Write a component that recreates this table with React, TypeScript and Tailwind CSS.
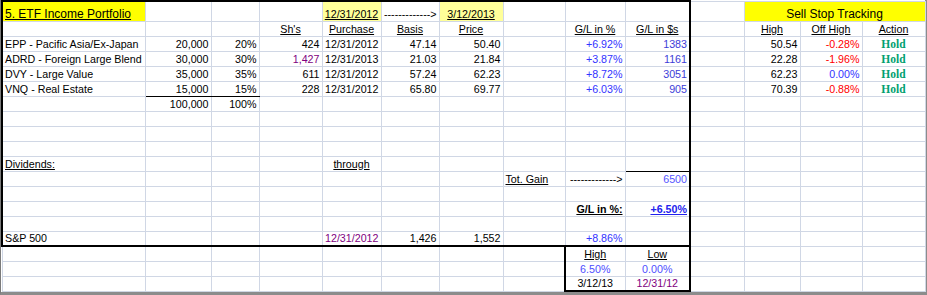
import React from "react";

type Cell = {
  v?: string;
  a?: "l" | "c" | "r";
  cls?: string;
  span?: number;
};

const widths = [
  "w-[143px]",
  "w-[66px]",
  "w-[48px]",
  "w-[63px]",
  "w-[59px]",
  "w-[58px]",
  "w-[64px]",
  "w-[62px]",
  "w-[60px]",
  "w-[65px]",
  "w-[54px]",
  "w-[56px]",
  "w-[62px]",
  "w-[63px]",
];

const U = "underline";
const BLUE = "text-[#3333ff]";
const PURPLE = "text-[#800080]";
const RED = "text-[#ff0000]";
const HOLD = "font-['Liberation_Serif',serif] font-bold text-[#00a070] text-[11.5px]";
const ARROW = "------------->";

const hold: Cell = { v: "Hold", a: "c", cls: HOLD };

function holding(
  name: string,
  amt: string,
  pct: string,
  sh: string,
  date: string,
  basis: string,
  price: string,
  gl: string,
  gain: string,
  high: string,
  off: string,
  shCls = "",
  offCls = RED
): Cell[] {
  return [
    { v: name },
    { v: amt, a: "r" },
    { v: pct, a: "r" },
    { v: sh, a: "r", cls: shCls },
    { v: date, a: "r" },
    { v: basis, a: "r" },
    { v: price, a: "r" },
    {},
    { v: gl, a: "r", cls: BLUE },
    { v: gain, a: "r", cls: "text-[#3c3cd8]" },
    {},
    { v: high, a: "r" },
    { v: off, a: "r", cls: offCls },
    hold,
  ];
}

const blank = (): Cell[] => Array.from({ length: 14 }, () => ({}));

function row(cells: Record<number, Cell>): Cell[] {
  const r = blank();
  Object.entries(cells).forEach(([k, c]) => (r[Number(k)] = c));
  return r;
}

const rows: Cell[][] = [
  [
    { v: "5. ETF Income Portfolio", cls: "bg-[#ffff00] underline text-[12px]" },
    {},
    {},
    {},
    { v: "12/31/2012", a: "c", cls: "bg-[#ffff99] underline" },
    { v: ARROW, a: "r" },
    { v: "3/12/2013", a: "c", cls: "bg-[#ffff99] underline" },
    {},
    {},
    {},
    {},
    { v: "Sell Stop Tracking", a: "c", span: 3, cls: "bg-[#ffff00] text-[12px]" },
  ],
  row({
    3: { v: "Sh's", a: "c", cls: U },
    4: { v: "Purchase", a: "c", cls: U },
    5: { v: "Basis", a: "c", cls: U },
    6: { v: "Price", a: "c", cls: U },
    8: { v: "G/L in %", a: "c", cls: U },
    9: { v: "G/L in $s", a: "c", cls: U },
    11: { v: "High", a: "c", cls: U },
    12: { v: "Off High", a: "c", cls: U },
    13: { v: "Action", a: "c", cls: U },
  }),
  holding("EPP - Pacific Asia/Ex-Japan", "20,000", "20%", "424", "12/31/2012", "47.14", "50.40", "+6.92%", "1383", "50.54", "-0.28%"),
  holding("ADRD - Foreign Large Blend", "30,000", "30%", "1,427", "12/31/2013", "21.03", "21.84", "+3.87%", "1161", "22.28", "-1.96%", PURPLE),
  holding("DVY - Large Value", "35,000", "35%", "611", "12/31/2012", "57.24", "62.23", "+8.72%", "3051", "62.23", "0.00%", "", BLUE),
  holding("VNQ - Real Estate", "15,000", "15%", "228", "12/31/2012", "65.80", "69.77", "+6.03%", "905", "70.39", "-0.88%"),
  row({ 1: { v: "100,000", a: "r" }, 2: { v: "100%", a: "r" } }),
  blank(),
  blank(),
  blank(),
  row({ 0: { v: "Dividends:", cls: U }, 4: { v: "through", a: "c", cls: U } }),
  row({
    7: { v: "Tot. Gain", cls: U },
    8: { v: ARROW, a: "r" },
    9: { v: "6500", a: "r", cls: "text-[#5555ff]" },
  }),
  blank(),
  row({
    8: { v: "G/L in %:", a: "r", cls: "underline font-bold" },
    9: { v: "+6.50%", a: "r", cls: "underline font-bold text-[#2222ee]" },
  }),
  blank(),
  row({
    0: { v: "S&P 500" },
    4: { v: "12/31/2012", a: "r", cls: PURPLE },
    5: { v: "1,426", a: "r" },
    6: { v: "1,552", a: "r" },
    8: { v: "+8.86%", a: "r", cls: BLUE },
  }),
  row({ 8: { v: "High", a: "c", cls: U }, 9: { v: "Low", a: "c", cls: U } }),
  row({ 8: { v: "6.50%", a: "c", cls: "text-[#4d4dff]" }, 9: { v: "0.00%", a: "c", cls: "text-[#4d4dff]" } }),
  row({ 8: { v: "3/12/13", a: "c" }, 9: { v: "12/31/12", a: "c", cls: PURPLE } }),
];

function borders(r: number, c: number, span: number): string {
  const out: string[] = [];
  const last = c + span - 1;
  // portfolio box
  if (r <= 15) {
    if (c === 0) out.push("border-l-2 border-l-black");
    if (last === 9 || (c <= 9 && last >= 9)) out.push("border-r-2 border-r-black");
  }
  if (r === 0 && c <= 9) out.push("border-t-2 border-t-black");
  if (r === 15 && c <= 9) out.push("border-b-2 border-b-black");
  // high / low box
  if (r >= 16) {
    if (c === 8) out.push("border-l-2 border-l-black");
    if (c === 9) out.push("border-r-2 border-r-black");
    if (r === 18 && (c === 8 || c === 9)) out.push("border-b-2 border-b-black");
  }
  // thin rules
  if (r === 5 && (c === 1 || c === 2)) out.push("border-b-black");
  if (r === 10 && c === 9) out.push("border-b-black");
  return out.join(" ");
}

export default function App() {
  return (
    <div className="w-[927px] h-[295px] bg-white overflow-hidden">
      <div className="w-[927px] border-l border-l-[#7a7a7a] border-r-2 border-r-[#8c8c8c] border-b-[3px] border-b-[#8c8c8c] bg-white">
        <table className="border-collapse table-fixed w-[924px] font-['Liberation_Sans',Arial,sans-serif] text-[10.7px] text-black">
          <colgroup>
            {widths.map((w, i) => (
              <col key={i} className={w} />
            ))}
          </colgroup>
          <tbody>
            {rows.map((cells, r) => {
              let col = 0;
              return (
                <tr key={r} className={r === 0 ? "h-[20px]" : "h-[15px]"}>
                  {cells.map((cell, i) => {
                    const span = cell.span ?? 1;
                    const c = col;
                    col += span;
                    const align =
                      cell.a === "r" ? "text-right" : cell.a === "c" ? "text-center" : "text-left";
                    return (
                      <td
                        key={i}
                        colSpan={span}
                        className={`border border-[#d0d7e5] p-0 px-[2px] leading-[13px] align-bottom whitespace-nowrap overflow-hidden ${align} ${borders(
                          r,
                          c,
                          span
                        )} ${cell.cls ?? ""}`}
                      >
                        {cell.v ?? ""}
                      </td>
                    );
                  })}
                </tr>
              );
            })}
          </tbody>
        </table>
      </div>
    </div>
  );
}
